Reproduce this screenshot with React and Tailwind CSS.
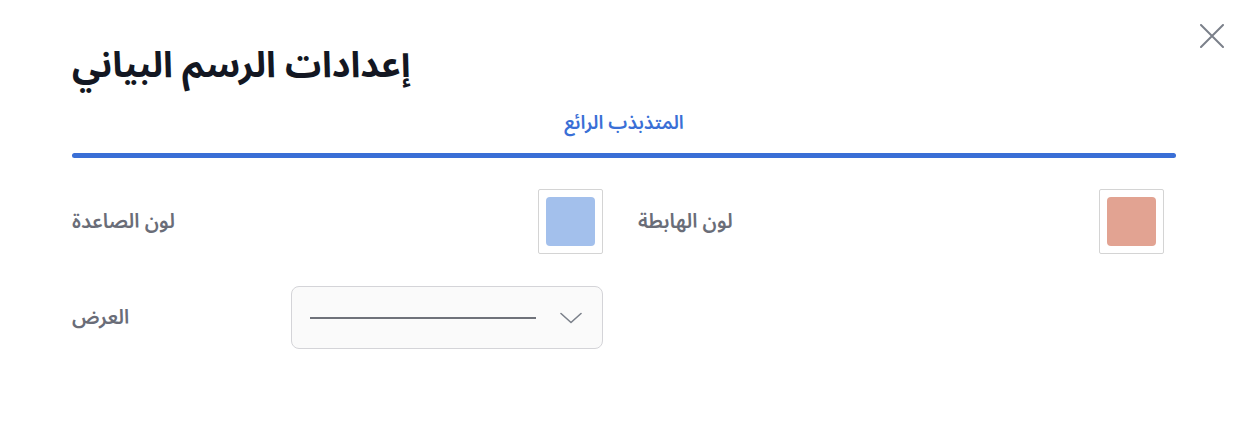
import React from "react";

const font = { fontFamily: '"Noto Sans Arabic", "DejaVu Sans", "Noto Sans", sans-serif' };

function Swatch({ color }) {
  return (
    <div className="w-[65px] h-[65px] border border-[#d4d4d4] rounded-[2px] p-[7px] bg-white">
      <div className={`w-full h-full rounded-[4px] ${color}`} />
    </div>
  );
}

export default function App() {
  return (
    <div className="relative w-[1248px] h-[444px] bg-white px-[72px] pt-[38px]" style={font}>
      <button className="absolute top-[24px] right-[24px] w-[24px] h-[24px] flex items-center justify-center">
        <svg width="24" height="24" viewBox="0 0 24 24" fill="none" stroke="#7b808a" strokeWidth="2" strokeLinecap="round">
          <path d="M1 1L23 23M23 1L1 23" />
        </svg>
      </button>
      <div className="flex">
        <h1 dir="rtl" className="text-[36px] leading-[56px] font-bold text-[#131722]">
          إعدادات الرسم البياني
        </h1>
      </div>
      <div className="mt-[14px] flex justify-center">
        <span dir="rtl" className="text-[19px] leading-[30px] font-semibold text-[#3a6fd6]">المتذبذب الرائع</span>
      </div>
      <div className="mt-[15px] h-[5px] w-[1104px] rounded-full bg-[#3a6fd6]" />
      <div className="mt-[31px] flex">
        <div className="w-[531px] flex items-center justify-between">
          <span dir="rtl" className="text-[20px] font-semibold text-[#6a6d78]">لون الصاعدة</span>
          <Swatch color="bg-[#a3c0ec]" />
        </div>
        <div className="ml-[35px] w-[526px] flex items-center justify-between">
          <span dir="rtl" className="text-[20px] font-semibold text-[#6a6d78]">لون الهابطة</span>
          <Swatch color="bg-[#e2a392]" />
        </div>
      </div>
      <div className="mt-[32px] flex items-center">
        <div className="w-[219px] flex">
          <span dir="rtl" className="text-[20px] font-semibold text-[#6a6d78]">العرض</span>
        </div>
        <div className="w-[312px] h-[63px] rounded-[8px] border border-[#d4d4d8] bg-[#fafafa] flex items-center pl-[18px] pr-[20px]">
          <div className="w-[226px] h-[2px] bg-[#6f727a]" />
          <div className="ml-auto">
            <svg width="22" height="12" viewBox="0 0 22 12" fill="none" stroke="#7b808a" strokeWidth="1.6" strokeLinecap="round" strokeLinejoin="round">
              <path d="M1 1.5L11 10.5L21 1.5" />
            </svg>
          </div>
        </div>
      </div>
    </div>
  );
}
